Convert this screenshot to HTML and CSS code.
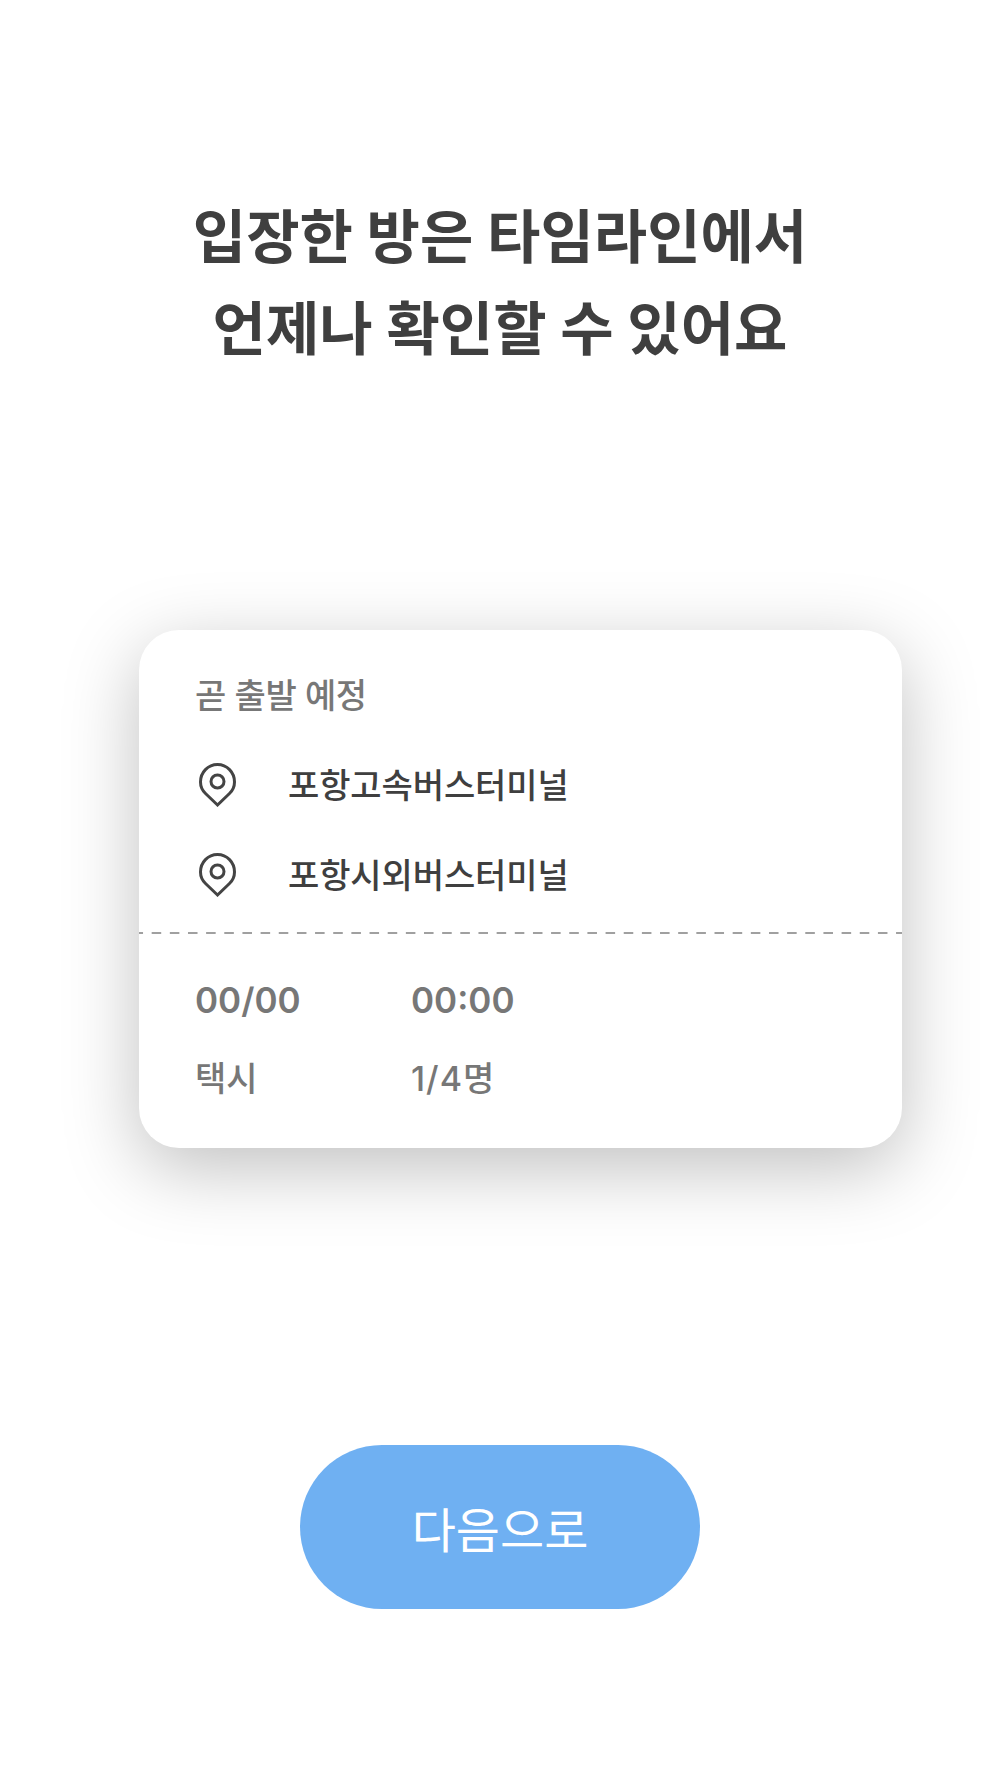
FILE: index.html
```html
<!DOCTYPE html>
<html lang="ko">
<head>
<meta charset="utf-8">
<title>타임라인 안내</title>
<link rel="stylesheet" href="styles.css">
</head>
<body>
<main class="screen">
  <h1 class="title">입장한 방은 타임라인에서<br>언제나 확인할 수 있어요</h1>
  <section class="card">
    <div class="route">
      <p class="status">곧 출발 예정</p>
      <div class="place">
        <svg class="pin" viewBox="0 0 37 44" aria-hidden="true"><path d="M18.5 42 L6.5 30.5 C3.2 27.3 1.5 23.5 1.5 19 C1.5 9.3 9 1.5 18.5 1.5 C28 1.5 35.5 9.3 35.5 19 C35.5 23.5 33.8 27.3 30.5 30.5 Z"/><circle cx="18.5" cy="18.5" r="6.5"/></svg>
        <span>포항고속버스터미널</span>
      </div>
      <div class="place">
        <svg class="pin" viewBox="0 0 37 44" aria-hidden="true"><path d="M18.5 42 L6.5 30.5 C3.2 27.3 1.5 23.5 1.5 19 C1.5 9.3 9 1.5 18.5 1.5 C28 1.5 35.5 9.3 35.5 19 C35.5 23.5 33.8 27.3 30.5 30.5 Z"/><circle cx="18.5" cy="18.5" r="6.5"/></svg>
        <span>포항시외버스터미널</span>
      </div>
    </div>
    <div class="divider"></div>
    <div class="info">
      <span class="big">00/00</span><span class="big">00:00</span>
      <span class="small">택시</span><span class="small count">1/4명</span>
    </div>
  </section>
  <button class="next" type="button">다음으로</button>
</main>
</body>
</html>
```
FILE: styles.css
```css
* { box-sizing: border-box; }
html, body { margin: 0; background: #fff; }
body { font-family: Inter, "Noto Sans CJK KR", sans-serif; }
.screen {
  width: 1000px;
  height: 1778px;
  padding-top: 191px;
  display: flex;
  flex-direction: column;
}
.title {
  margin: 0;
  text-align: center;
  font-size: 58px;
  line-height: 92px;
  font-weight: 700;
  letter-spacing: 0;
  color: #3f3f3f;
}
.card {
  width: 763px;
  height: 518px;
  margin: 255px 0 0 139px;
  background: #fff;
  border-radius: 40px;
  box-shadow: 0 20px 75px rgba(0, 0, 0, 0.25);
  display: flex;
  flex-direction: column;
}
.route { padding: 44px 56px 0; height: 302px; }
.status {
  margin: 0 0 20px;
  font-size: 34px;
  line-height: 44px;
  font-weight: 500;
  color: #777;
  letter-spacing: -0.4px;
}
.place {
  display: flex;
  align-items: center;
  height: 90px;
  font-size: 34px;
  font-weight: 500;
  color: #3f3f3f;
  letter-spacing: -0.1px;
}
.pin {
  width: 37px;
  height: 44px;
  margin: 4px 52px 0 4px;
  fill: none;
  stroke: #444;
  stroke-width: 3;
  flex: none;
}
.divider {
  height: 2px;
  background: linear-gradient(to right, #a0a0a0 10px, transparent 10px) -5.5px 0 / 18.17px 2px repeat-x;
}
.info {
  display: grid;
  grid-template-columns: 216px auto;
  grid-template-rows: 50px 50px;
  row-gap: 26px;
  padding: 41px 56px 0;
  color: #777;
  font-weight: 500;
  align-items: center;
  justify-content: start;
}
.big { font-size: 35px; font-weight: 600; }
.small { font-size: 34px; }
.count { letter-spacing: 1px; }
.next {
  width: 400px;
  height: 164px;
  margin: 297px 0 0 300px;
  border: 0;
  border-radius: 82px;
  background: #6fb0f2;
  color: #fff;
  font-family: inherit;
  font-size: 48px;
  font-weight: 400;
}
```
